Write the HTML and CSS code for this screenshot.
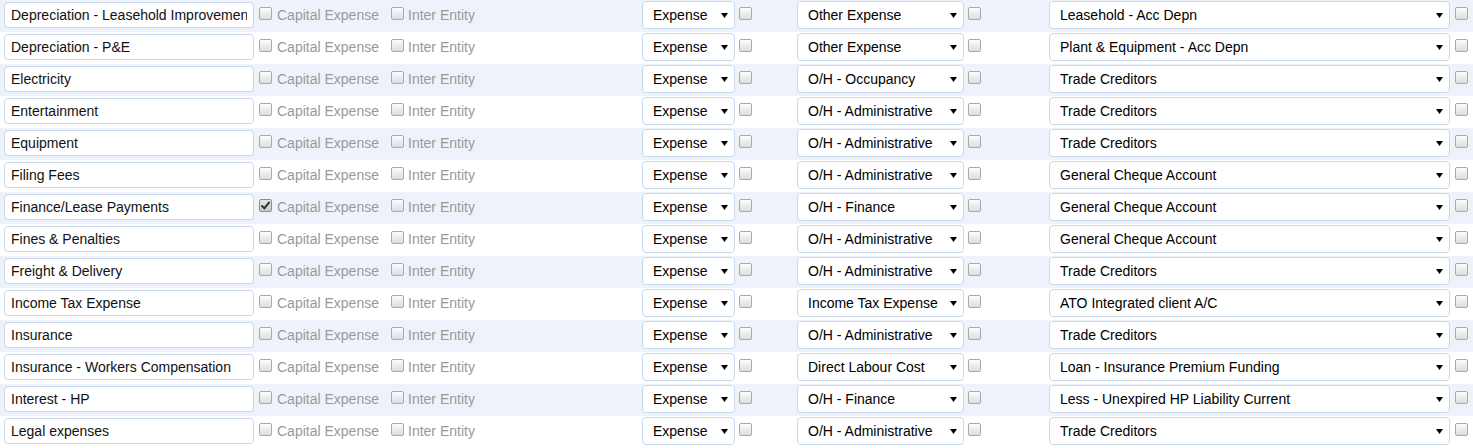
FILE: index.html
```html
<!DOCTYPE html>
<html lang="en">
<head>
    <meta charset="UTF-8">
    <title>Chart of Accounts</title>
    <link rel="stylesheet" href="styles.css">
</head>
<body>
    <div class="accounts-list" id="accountsList">
        <!-- rows rendered below -->
    </div>

    <script>
        const accounts = [
            { name: 'Depreciation - Leasehold Improvements', capital: false, category: 'Other Expense', target: 'Leasehold - Acc Depn' },
            { name: 'Depreciation - P&E', capital: false, category: 'Other Expense', target: 'Plant & Equipment - Acc Depn' },
            { name: 'Electricity', capital: false, category: 'O/H - Occupancy', target: 'Trade Creditors' },
            { name: 'Entertainment', capital: false, category: 'O/H - Administrative', target: 'Trade Creditors' },
            { name: 'Equipment', capital: false, category: 'O/H - Administrative', target: 'Trade Creditors' },
            { name: 'Filing Fees', capital: false, category: 'O/H - Administrative', target: 'General Cheque Account' },
            { name: 'Finance/Lease Payments', capital: true, category: 'O/H - Finance', target: 'General Cheque Account' },
            { name: 'Fines & Penalties', capital: false, category: 'O/H - Administrative', target: 'General Cheque Account' },
            { name: 'Freight & Delivery', capital: false, category: 'O/H - Administrative', target: 'Trade Creditors' },
            { name: 'Income Tax Expense', capital: false, category: 'Income Tax Expense', target: 'ATO Integrated client A/C' },
            { name: 'Insurance', capital: false, category: 'O/H - Administrative', target: 'Trade Creditors' },
            { name: 'Insurance - Workers Compensation', capital: false, category: 'Direct Labour Cost', target: 'Loan - Insurance Premium Funding' },
            { name: 'Interest - HP', capital: false, category: 'O/H - Finance', target: 'Less - Unexpired HP Liability Current' },
            { name: 'Legal expenses', capital: false, category: 'O/H - Administrative', target: 'Trade Creditors' }
        ];

        const escapeHtml = (str) => str.replace(/&/g, '&amp;').replace(/</g, '&lt;').replace(/"/g, '&quot;');

        document.getElementById('accountsList').innerHTML = accounts.map(acc => `
            <div class="account-row">
                <div><input type="text" class="name-input" value="${escapeHtml(acc.name)}"></div>
                <label class="flag"><input type="checkbox" class="check" ${acc.capital ? 'checked' : ''}>Capital Expense</label>
                <label class="flag flag-inter"><input type="checkbox" class="check">Inter Entity</label>
                <div class="select-wrap select-type">
                    <select class="field-select"><option>Expense</option></select>
                </div>
                <div class="check-cell"><input type="checkbox" class="check"></div>
                <div class="select-wrap select-category">
                    <select class="field-select"><option>${escapeHtml(acc.category)}</option></select>
                </div>
                <div class="check-cell"><input type="checkbox" class="check"></div>
                <div class="select-wrap select-account">
                    <select class="field-select"><option>${escapeHtml(acc.target)}</option></select>
                </div>
                <div class="check-cell"><input type="checkbox" class="check"></div>
            </div>
        `).join('');
    </script>
</body>
</html>
```

FILE: styles.css
```css
:root {
    --row-blue: #eef3fb;
    --field-border: #c9d8ec;
    --muted: #999;
}

body {
    margin: 0;
    font-family: "Liberation Sans", Arial, sans-serif;
    font-size: 14px;
    color: #111;
    background: #fff;
}

.account-row {
    display: grid;
    grid-template-columns: 259px 132px 251px 97px 58px 171px 81px 406px 1fr;
    align-items: start;
    height: 32px;
}

.account-row:nth-child(odd) {
    background: var(--row-blue);
}

.name-input {
    box-sizing: border-box;
    width: 250px;
    height: 26px;
    margin: 2px 0 0 4px;
    padding: 0 6px;
    border: 1px solid var(--field-border);
    border-radius: 4px;
    font: inherit;
    color: #111;
    background: #fff;
    outline: none;
}

.flag {
    display: flex;
    align-items: flex-start;
    gap: 5px;
    margin-top: 7px;
    line-height: 16px;
    color: var(--muted);
    white-space: nowrap;
}

.flag-inter {
    gap: 4px;
}

.check {
    appearance: none;
    -webkit-appearance: none;
    position: relative;
    box-sizing: border-box;
    width: 13px;
    height: 13px;
    margin: 0;
    border: 1px solid #a9a9a9;
    border-radius: 2px;
    background: linear-gradient(#fdfdfd, #dddddd);
    flex-shrink: 0;
}

.check:checked {
    background: linear-gradient(#e4e4e4, #c9c9c9);
    border-color: #8f8f8f;
}

.check:checked::after {
    content: "";
    position: absolute;
    left: 3px;
    top: 0;
    width: 3px;
    height: 7px;
    border: solid #333;
    border-width: 0 2px 2px 0;
    transform: rotate(40deg);
}

.check-cell {
    margin-top: 7px;
    line-height: 0;
}

.select-wrap {
    position: relative;
    margin-top: 1px;
}

.select-type { width: 93px; }
.select-category { width: 167px; }
.select-account { width: 401px; }

/* dropdown arrow drawn over the select */
.select-wrap::after {
    content: "";
    position: absolute;
    right: 7px;
    top: 12px;
    width: 7px;
    height: 5px;
    background: #000;
    clip-path: polygon(0 0, 100% 0, 50% 100%);
    pointer-events: none;
}

.field-select {
    appearance: none;
    -webkit-appearance: none;
    box-sizing: border-box;
    width: 100%;
    height: 28px;
    padding: 0 20px 0 10px;
    border: 1px solid var(--field-border);
    border-radius: 4px;
    font: inherit;
    color: #000;
    background: #fff;
    outline: none;
}
```
